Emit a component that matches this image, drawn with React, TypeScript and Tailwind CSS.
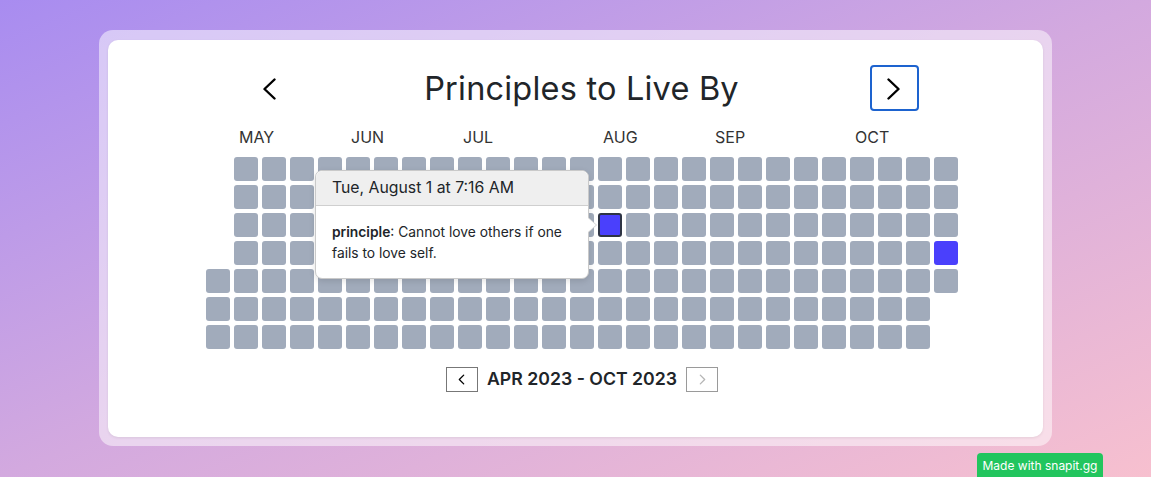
import React from 'react';

const COLS = 27;
const ROWS = 7;

function Chevron({ dir, className }: { dir: 'left' | 'right'; className?: string }) {
  return (
    <svg viewBox="0 0 14 22" className={className} fill="none" stroke="currentColor" strokeWidth="2.4" strokeLinecap="round" strokeLinejoin="round">
      {dir === 'left' ? <polyline points="12.5,1.5 2.5,11 12.5,20.5" /> : <polyline points="1.5,1.5 11.5,11 1.5,20.5" />}
    </svg>
  );
}

function SmallChevron({ dir }: { dir: 'left' | 'right' }) {
  return (
    <svg viewBox="0 0 8 12" className="w-[7px] h-[11px]" fill="none" stroke="currentColor" strokeWidth="1.5" strokeLinecap="round" strokeLinejoin="round">
      {dir === 'left' ? <polyline points="6.5,1 1.5,6 6.5,11" /> : <polyline points="1.5,1 6.5,6 1.5,11" />}
    </svg>
  );
}

const months = [
  { label: 'MAY', col: 1 },
  { label: 'JUN', col: 5 },
  { label: 'JUL', col: 9 },
  { label: 'AUG', col: 14 },
  { label: 'SEP', col: 18 },
  { label: 'OCT', col: 23 },
];

function cellState(col: number, row: number) {
  if (col === 0 && row < 4) return 'empty';
  if (col === COLS - 1 && row > 4) return 'empty';
  if (col === 14 && row === 2) return 'selected';
  if (col === 26 && row === 3) return 'filled';
  return 'blank';
}

function Tooltip() {
  return (
    <div className="absolute left-[109px] top-[13px] w-[274px] h-[109px] bg-white border border-[#c9c9c9] rounded-[7px] shadow-[0_2px_6px_rgba(0,0,0,0.12)] font-['Inter',sans-serif]">
      <div className="h-[35px] bg-[#efefef] border-b border-[#cfcfcf] rounded-t-[7px] px-4 flex items-center text-[15.8px] text-[#212529]">
        Tue, August 1 at 7:16 AM
      </div>
      <div className="px-4 pt-[16px] text-[13.8px] leading-[21px] text-[#212529]">
        <span className="font-semibold">principle</span>: Cannot love others if one fails to love self.
      </div>
      <div className="absolute right-[-9px] top-[46px] w-0 h-0 border-y-[8px] border-y-transparent border-l-[9px] border-l-[#d0d0d0]" />
      <div className="absolute right-[-8px] top-[47px] w-0 h-0 border-y-[7px] border-y-transparent border-l-[8px] border-l-white" />
    </div>
  );
}

export default function App() {
  return (
    <div className="relative w-[1151px] h-[477px] overflow-hidden bg-gradient-to-br from-[#a88cf0] via-[#d3a9df] to-[#f7c0cf] font-['Inter',sans-serif]">
      <div className="pt-[30px] flex justify-center">
        <div className="w-[953px] p-[9px] pt-[10px] rounded-[14px] bg-white/50">
          <div className="w-[935px] h-[397px] bg-white rounded-[10px] shadow-[0_1px_3px_rgba(0,0,0,0.08)] pt-[25px] pl-[98px]">
            <div className="w-[752px]">
              <div className="flex items-center justify-between px-[38px] pr-[39px] h-[46px]">
                <button className="w-[49px] h-[46px] flex items-center justify-center text-black">
                  <Chevron dir="left" className="w-[14px] h-[22px] translate-y-[1px]" />
                </button>
                <h1 className="text-[32.5px] leading-none text-[#212529] tracking-[0.2px] mt-[3px]">Principles to Live By</h1>
                <button className="w-[49px] h-[46px] flex items-center justify-center text-black border-2 border-[#1d63cf] rounded-[4px]">
                  <Chevron dir="right" className="w-[14px] h-[22px] translate-y-[1px]" />
                </button>
              </div>

              <div className="relative h-[46px] mt-0">
                {months.map((m) => (
                  <span key={m.label} className="absolute top-[16px] text-[16px] leading-[20px] text-[#333]" style={{ left: m.col * 28 + 5 }}>
                    {m.label}
                  </span>
                ))}
              </div>

              <div className="relative flex gap-1">
                {Array.from({ length: COLS }).map((_, c) => (
                  <div key={c} className="flex flex-col gap-1">
                    {Array.from({ length: ROWS }).map((_, r) => {
                      const s = cellState(c, r);
                      if (s === 'empty') return <div key={r} className="w-6 h-6" />;
                      if (s === 'selected')
                        return <div key={r} className="w-6 h-6 rounded-[3px] bg-[#4a40fc] border-2 border-[#2e3444]" />;
                      if (s === 'filled') return <div key={r} className="w-6 h-6 rounded-[3px] bg-[#4a40fc]" />;
                      return <div key={r} className="w-6 h-6 rounded-[3px] bg-[#a1abbb]" />;
                    })}
                  </div>
                ))}
                <Tooltip />
              </div>

              <div className="flex items-center justify-center gap-[9px] mt-[17px]">
                <button className="w-[32px] h-[25px] border border-[#777] flex items-center justify-center text-black">
                  <SmallChevron dir="left" />
                </button>
                <span className="text-[17.7px] font-semibold text-[#212529]">APR 2023 - OCT 2023</span>
                <button className="w-[32px] h-[25px] border border-[#9a9a9a] flex items-center justify-center text-[#b5b5b5]">
                  <SmallChevron dir="right" />
                </button>
              </div>
            </div>
          </div>
        </div>
      </div>

      <div className="absolute right-[48px] top-[453px] w-[126px] h-[30px] bg-[#22c55e] rounded-[4px] text-white text-[12px] pt-[4px] text-center font-['Inter',sans-serif]">
        Made with snapit.gg
      </div>
    </div>
  );
}
